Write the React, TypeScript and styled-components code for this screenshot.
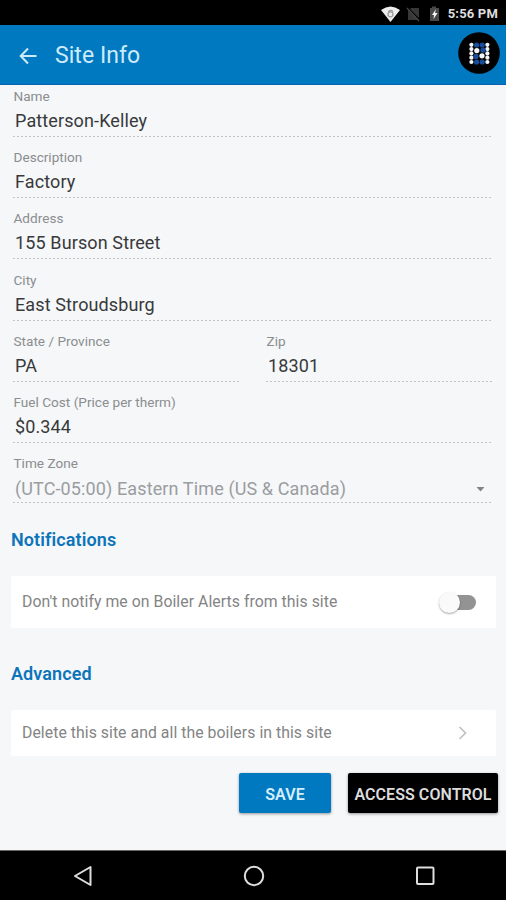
import React from "react";
import styled, { createGlobalStyle } from "styled-components";

const GlobalStyle = createGlobalStyle`
  * { box-sizing: border-box; }
  body { margin: 0; background: #f5f7f9; }
  button { font: inherit; }
`;

const Screen = styled.div`
  width: 506px;
  height: 900px;
  display: flex;
  flex-direction: column;
  overflow: hidden;
  background: #f5f7f9;
  font-family: Roboto, "Liberation Sans", sans-serif;
`;

const StatusBar = styled.div`
  height: 25px;
  flex: none;
  display: flex;
  align-items: center;
  justify-content: flex-end;
  padding: 2px 8px 0 0;
  background: #000;
`;

const Clock = styled.span`
  margin-left: 7px;
  color: #dedede;
  font-size: 13px;
  font-weight: 700;
  line-height: 16px;
  letter-spacing: 0.18px;
  white-space: nowrap;
`;

const Header = styled.header`
  height: 60px;
  flex: none;
  display: flex;
  align-items: center;
  padding: 0 6px 3px 18px;
  background: #0079c1;
  border-bottom: 1px solid #0a62b0;
`;

const Title = styled.h1`
  flex: 1;
  margin: 5px 0 0 17px;
  color: #cdebfb;
  font-size: 23px;
  font-weight: 400;
  line-height: 28px;
  letter-spacing: 0.05px;
`;

const Form = styled.section`
  height: 418px;
  flex: none;
  padding: 0 14px 0 13px;
  display: flex;
  flex-direction: column;
`;

const FieldRow = styled.div`
  display: flex;
  gap: 27px;
`;

const Field = styled.div<{ $first?: boolean; $select?: boolean }>`
  height: ${(p) => (p.$first ? "52px" : p.$select ? "60.2px" : "61.2px")};
  flex: none;
  display: flex;
  flex-direction: column;
  justify-content: flex-end;

  ${FieldRow} > & {
    flex: 1;
  }
`;

const Label = styled.span`
  height: 16px;
  margin-left: 0.5px;
  color: #8b8d8f;
  font-size: 13.6px;
  line-height: 16px;
`;

const Value = styled.span<{ $muted?: boolean }>`
  height: ${(p) => (p.$muted ? 31 : 32)}px;
  padding: ${(p) => (p.$muted ? 5 : 2)}px 7px 0 2px;
  display: flex;
  align-items: center;
  justify-content: space-between;
  color: ${(p) => (p.$muted ? "#9b9d9f" : "#38393b")};
  font-size: 18px;
  line-height: 24px;
  letter-spacing: 0.12px;
`;

const DottedLine = styled.span`
  height: 1px;
  flex: none;
  background: repeating-linear-gradient(90deg, #c2c4c6 0 2px, transparent 2px 4px);
`;

const Section = styled.section<{ $height: number }>`
  height: ${(p) => p.$height}px;
  flex: none;
  padding: 0 10px 0 11px;
`;

const SectionTitle = styled.h2`
  margin: 0 0 25px;
  padding-top: 26px;
  color: #0d74b9;
  font-size: 18px;
  font-weight: 600;
  line-height: 22px;
  letter-spacing: 0.1px;
`;

const Card = styled.div<{ $height: number }>`
  height: ${(p) => p.$height}px;
  padding: 0 20px 0 11px;
  display: flex;
  align-items: center;
  justify-content: space-between;
  background: #fff;
  border-radius: 2px;
`;

const CardText = styled.span`
  color: #848484;
  font-size: 15.8px;
  line-height: 20px;
  letter-spacing: 0.05px;
  white-space: nowrap;
`;

const Toggle = styled.span`
  width: 31px;
  height: 15px;
  display: flex;
  align-items: center;
  background: #939393;
  border-radius: 8px;
`;

const Knob = styled.span`
  width: 21px;
  height: 21px;
  flex: none;
  margin-left: -6px;
  border-radius: 50%;
  background: #fafafa;
  box-shadow: 0 1px 2px rgba(0, 0, 0, 0.35);
`;

const Actions = styled.div`
  flex: 1;
  display: flex;
  justify-content: flex-end;
  align-items: flex-start;
  gap: 17px;
  padding: 18px 8px 0 0;
`;

const ActionButton = styled.button<{ $dark?: boolean }>`
  width: ${(p) => (p.$dark ? 150 : 92)}px;
  height: 40px;
  padding: 2px 0 0;
  border: 0;
  border-radius: 2px;
  background: ${(p) => (p.$dark ? "#000" : "#0079c1")};
  color: ${(p) => (p.$dark ? "#dcdcdc" : "#d5eefb")};
  font-size: 16px;
  font-weight: 600;
  letter-spacing: 0.06px;
  white-space: nowrap;
  box-shadow: 0 1px 3px rgba(0, 0, 0, 0.4);
`;

const NavBar = styled.nav`
  height: 50px;
  flex: none;
  display: flex;
  align-items: center;
  justify-content: space-between;
  padding: 0 69px 0 71px;
  background: #000;
  border-top: 1px solid #666;
`;

const StatusIcons = () => (
  <svg width="60" height="18" viewBox="0 0 60 18">
    <path d="M0 5Q9.500-2 19 5L9.500 17Z" fill="#ededed" />
    <path d="M7.200 7.200Q9.500 4 12 6.500M7 9.300a2.500 2.500 0 1 0 5 0a2.500 2.500 0 1 0-5 0" fill="none" stroke="#9b9b9b" strokeWidth="1.300" />
    <path d="M27 5 37 15H27Z M30 3H38V13L29 4Z" fill="#373737" />
    <path d="M26 3 38 16" stroke="#4a4a4a" strokeWidth="1.200" />
    <path d="M49 3h2V1.500h4V3h3V16H49Z" fill="#484848" />
    <path d="M55 4 51 10H53L52.500 14 56.500 8H54Z" fill="#f5f5f5" />
  </svg>
);

const BackArrow = () => (
  <svg width="20" height="24" viewBox="0 0 20 24" fill="none" stroke="#cdebfb" strokeWidth="2">
    <path d="M18.500 15H3M10 7.500 2.700 15 10 22.500" />
  </svg>
);

const sideRows = [12.8, 17.1, 21.4, 25.7, 30];
const innerDots = [
  [18.6, 13, "#174d9a"],
  [24.2, 13, "#174d9a"],
  [25, 18.2, "#174d9a"],
  [18, 24.4, "#174d9a"],
  [18.6, 30, "#174d9a"],
  [24.2, 30, "#174d9a"],
  [18.8, 18.6, "#f2f5fa"],
  [24, 23.8, "#f2f5fa"],
] as const;

const Logo = () => (
  <svg width="42" height="42" viewBox="0 0 42 42">
    <circle cx="21" cy="21" r="20.800" fill="#000" />
    {sideRows.map((y) => (
      <g key={y} fill="#f2f5fa">
        <circle cx="13.400" cy={y} r="2.100" />
        <circle cx="29.400" cy={y} r="2.100" />
      </g>
    ))}
    {innerDots.map(([x, y, fill]) => (
      <circle key={`${x}-${y}`} cx={x} cy={y} r="2.600" fill={fill} />
    ))}
  </svg>
);

const Caret = () => (
  <svg width="9" height="5" viewBox="0 0 9 5">
    <path d="M0.500 0H8.500L4.500 4.500Z" fill="#818385" />
  </svg>
);

const Chevron = () => (
  <svg width="22" height="18" viewBox="0 0 22 18">
    <path d="M5.500 3 11.500 9 5.500 15" fill="none" stroke="#c1c1c1" strokeWidth="1.700" />
  </svg>
);

const NavIcon = ({ children }: { children: React.ReactNode }) => (
  <svg width="24" height="24" viewBox="0 0 24 24" fill="none" stroke="#dedede" strokeWidth="2">
    {children}
  </svg>
);

interface TextFieldProps {
  label: string;
  value: string;
  first?: boolean;
  select?: boolean;
}

const TextField = ({ label, value, first, select }: TextFieldProps) => (
  <Field $first={first} $select={select}>
    <Label>{label}</Label>
    <Value $muted={select}>
      {value}
      {select && <Caret />}
    </Value>
    <DottedLine />
  </Field>
);

export default function App() {
  return (
    <>
      <GlobalStyle />
      <Screen>
        <StatusBar>
          <StatusIcons />
          <Clock>5:56 PM</Clock>
        </StatusBar>
        <Header>
          <BackArrow />
          <Title>Site Info</Title>
          <Logo />
        </Header>
        <Form>
          <TextField first label="Name" value="Patterson-Kelley" />
          <TextField label="Description" value="Factory" />
          <TextField label="Address" value="155 Burson Street" />
          <TextField label="City" value="East Stroudsburg" />
          <FieldRow>
            <TextField label="State / Province" value="PA" />
            <TextField label="Zip" value="18301" />
          </FieldRow>
          <TextField label="Fuel Cost (Price per therm)" value="$0.344" />
          <TextField select label="Time Zone" value="(UTC-05:00) Eastern Time (US & Canada)" />
        </Form>
        <Section $height={134}>
          <SectionTitle>Notifications</SectionTitle>
          <Card $height={52}>
            <CardText>Don't notify me on Boiler Alerts from this site</CardText>
            <Toggle><Knob /></Toggle>
          </Card>
        </Section>
        <Section $height={118}>
          <SectionTitle>Advanced</SectionTitle>
          <Card $height={46}>
            <CardText>Delete this site and all the boilers in this site</CardText>
            <Chevron />
          </Card>
        </Section>
        <Actions>
          <ActionButton>SAVE</ActionButton>
          <ActionButton $dark>ACCESS CONTROL</ActionButton>
        </Actions>
        <NavBar>
          <NavIcon><path d="M19.500 3V21L4 12Z" strokeLinejoin="round" /></NavIcon>
          <NavIcon><circle cx="12" cy="12" r="9.200" /></NavIcon>
          <NavIcon><rect x="4" y="3.500" width="16.500" height="16.500" rx="1" /></NavIcon>
        </NavBar>
      </Screen>
    </>
  );
}
